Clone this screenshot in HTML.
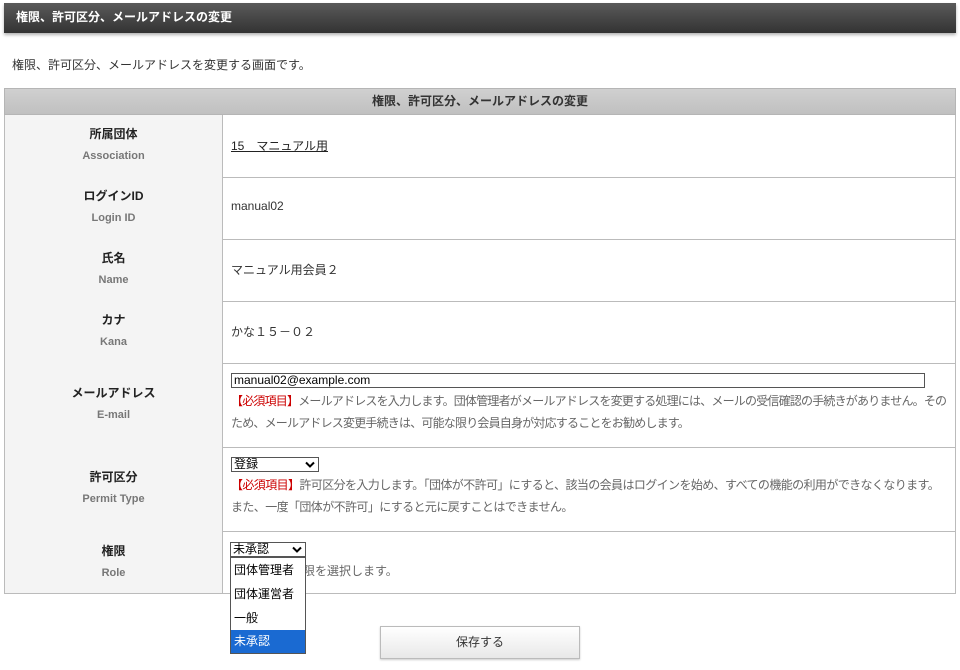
<!DOCTYPE html>
<html><head><meta charset="utf-8"><style>
*{margin:0;padding:0;box-sizing:border-box}
body{width:960px;height:670px;background:#fff;font-family:"Liberation Sans","Noto Sans CJK JP",sans-serif;font-size:12px;color:#333;position:relative;overflow:hidden}
.a{position:absolute}
.bar{left:4px;top:3px;width:952px;height:30px;background:linear-gradient(#5a5a5a,#333);box-shadow:0 2px 3px rgba(0,0,0,.3);color:#fff;font-weight:bold;font-size:12px;line-height:29px;padding-left:12px}
.th{left:4px;top:88px;width:952px;height:27px;background:linear-gradient(#d0d0d0,#c0c0c0);border:1px solid #b5b5b5;text-align:center;font-weight:bold;line-height:25px;color:#333}
.row{left:4px;width:952px;border:1px solid #bbb;border-top:none}
.lab{position:absolute;left:0;top:0;bottom:0;width:218px;background:#f4f4f4;border-right:1px solid #bbb;text-align:center;font-weight:bold}
.lab .j{color:#222}
.lab .e{color:#777;font-size:11px}
.val{position:absolute;left:226px;right:0}
.req{color:#c00}
.note{color:#666;line-height:22px;white-space:nowrap;letter-spacing:-0.6px}
.sel{border:1px solid #555;height:15px;font-size:12px;line-height:13px;padding-left:2px;color:#000;background:#fff}
.chev{position:absolute;right:3px;top:3px}
</style></head><body>
<div class="a bar">権限、許可区分、メールアドレスの変更</div>
<div class="a" style="left:12px;top:56px;">権限、許可区分、メールアドレスを変更する画面です。</div>
<div class="a th">権限、許可区分、メールアドレスの変更</div>

<div class="a row" style="top:115px;height:63px"><div class="lab"><div class="j" style="margin-top:10px">所属団体</div><div class="e" style="margin-top:8px">Association</div></div><div class="val" style="top:22px;text-decoration:underline;color:#222">15　マニュアル用</div></div>
<div class="a row" style="top:177px;height:63px"><div class="lab"><div class="j" style="margin-top:10px">ログインID</div><div class="e" style="margin-top:8px">Login ID</div></div><div class="val" style="top:22px">manual02</div></div>
<div class="a row" style="top:239px;height:63px"><div class="lab"><div class="j" style="margin-top:10px">氏名</div><div class="e" style="margin-top:8px">Name</div></div><div class="val" style="top:22px">マニュアル用会員２</div></div>
<div class="a row" style="top:301px;height:63px"><div class="lab"><div class="j" style="margin-top:10px">カナ</div><div class="e" style="margin-top:8px">Kana</div></div><div class="val" style="top:22px">かな１５－０２</div></div>
<div class="a row" style="top:363px;height:85px"><div class="lab"><div class="j" style="margin-top:21px">メールアドレス</div><div class="e" style="margin-top:8px">E-mail</div></div>
<div class="val" style="top:10px"><div class="sel" style="width:694px">manual02@example.com</div><div class="note" style="margin-top:2px;letter-spacing:-0.8px"><span class="req">【必須項目】</span>メールアドレスを入力します。団体管理者がメールアドレスを変更する処理には、メールの受信確認の手続きがありません。その<br>ため、メールアドレス変更手続きは、可能な限り会員自身が対応することをお勧めします。</div></div></div>
<div class="a row" style="top:447px;height:85px"><div class="lab"><div class="j" style="margin-top:21px">許可区分</div><div class="e" style="margin-top:8px">Permit Type</div></div>
<div class="val" style="top:10px"><div class="sel" style="width:88px;position:relative">登録<svg class="chev" width="10" height="7" viewBox="0 0 10 7"><path d="M1 1.5L5 5.5L9 1.5" fill="none" stroke="#000" stroke-width="2"/></svg></div><div class="note" style="margin-top:2px"><span class="req">【必須項目】</span>許可区分を入力します。「団体が不許可」にすると、該当の会員はログインを始め、すべての機能の利用ができなくなります。<br>また、一度「団体が不許可」にすると元に戻すことはできません。</div></div></div>
<div class="a row" style="top:531px;height:63px"><div class="lab"><div class="j" style="margin-top:11px">権限</div><div class="e" style="margin-top:8px">Role</div></div><div class="val note" style="top:29px;letter-spacing:0">該当会員の権限を選択します。</div></div>
<div class="a sel" style="left:230px;top:542px;width:76px;">未承認<svg class="chev" width="10" height="7" viewBox="0 0 10 7"><path d="M1 1.5L5 5.5L9 1.5" fill="none" stroke="#000" stroke-width="2"/></svg></div>
<div class="a" style="left:230px;top:557px;width:76px;height:97px;border:1px solid #555;background:#fff;color:#000">
<div style="height:24px;line-height:24px;padding-left:3px">団体管理者</div>
<div style="height:24px;line-height:24px;padding-left:3px">団体運営者</div>
<div style="height:24px;line-height:24px;padding-left:3px">一般</div>
<div style="height:23px;line-height:23px;padding-left:3px;background:#1a6ad2;color:#fff">未承認</div></div>
<div class="a" style="left:380px;top:626px;width:200px;height:33px;border:1px solid #bbb;background:linear-gradient(#fff,#e8e8e8);box-shadow:0 1px 2px rgba(0,0,0,.2);text-align:center;line-height:31px;color:#333">保存する</div>
</body></html>
